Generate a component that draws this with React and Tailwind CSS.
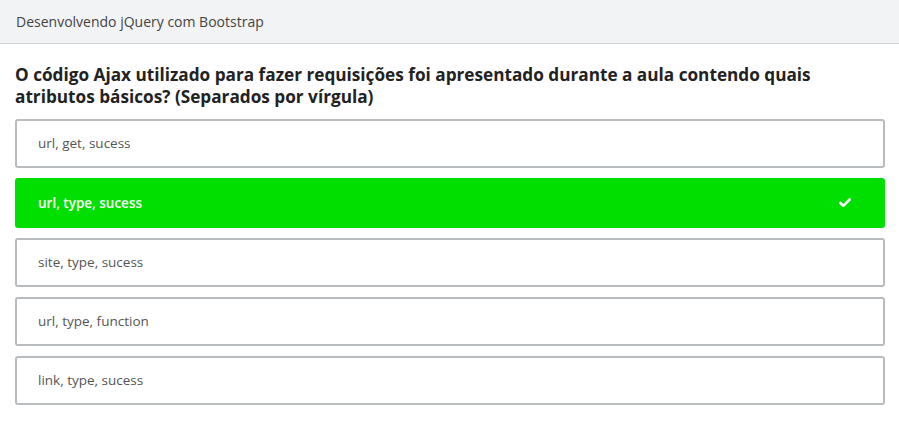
import { Check } from 'lucide-react';

const opcoes = [
  { texto: 'url, get, sucess' },
  { texto: 'url, type, sucess', correta: true },
  { texto: 'site, type, sucess' },
  { texto: 'url, type, function' },
  { texto: 'link, type, sucess' },
];

export default function App() {
  return (
    <div className="w-[899px] h-[428px] bg-white font-['Open_Sans',sans-serif] overflow-hidden">
      <div className="h-[44px] bg-[#f2f3f5] border-b border-[#cfd1d3] flex items-center px-4 text-[14px] text-[#444]">
        Desenvolvendo jQuery com Bootstrap
      </div>

      <div className="px-[15px] pt-[20px]">
        <h2 className="text-[17.2px] font-bold leading-[22px] text-[#222] pr-6">
          O código Ajax utilizado para fazer requisições foi apresentado durante a aula contendo quais atributos básicos? (Separados por vírgula)
        </h2>

        <div className="mt-[11px] flex flex-col gap-[10px] w-[870px]">
          {opcoes.map((op) =>
            op.correta ? (
              <div
                key={op.texto}
                className="h-[50px] rounded-[3px] bg-[#00df00] flex items-center justify-between pl-[23px] pr-[33px] text-[13.5px] font-semibold text-white"
              >
                <span>{op.texto}</span>
                <Check size={14} strokeWidth={4.5} />
              </div>
            ) : (
              <div
                key={op.texto}
                className="h-[49px] rounded-[3px] border-2 border-[#b8bcbf] flex items-center pl-[21px] text-[13.5px] text-[#555]"
              >
                {op.texto}
              </div>
            )
          )}
        </div>
      </div>
    </div>
  );
}
